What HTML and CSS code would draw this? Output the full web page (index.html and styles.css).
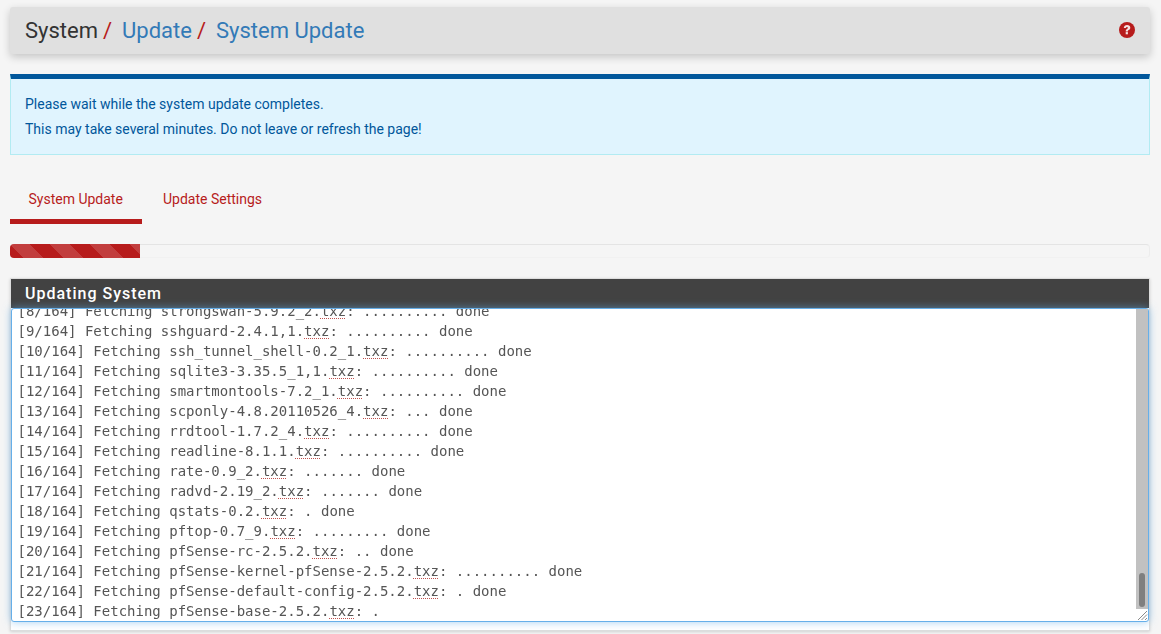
FILE: index.html
```html
<!DOCTYPE html>
<html lang="en">
<head>
<meta charset="utf-8">
<title>System / Update / System Update</title>
<link rel="stylesheet" href="styles.css">
</head>
<body>
<div class="page">
  <header class="crumbs">
    <h1 class="trail"><span>System</span><i class="sep">/</i><a class="link">Update</a><i class="sep">/</i><a class="link">System Update</a></h1>
    <svg class="help" viewBox="0 0 16 16" width="16" height="16" aria-hidden="true"><circle cx="8" cy="8" r="8" fill="#b71c1c"/><path d="M4.8 6C4.9 4.2 6.3 3 8.1 3c1.9 0 3.2 1.1 3.2 2.7 0 1.3-.8 1.9-1.6 2.4-.6.4-.8.6-.8 1.3H6.7c0-1.3.4-1.9 1.2-2.4.6-.4 1-.7 1-1.2 0-.5-.4-.8-.9-.8-.7 0-1.1.4-1.2 1z" fill="#f6e3e3"/><rect x="6.7" y="10.1" width="2.2" height="2.2" fill="#f6e3e3"/></svg>
  </header>

  <div class="notice">
    <p>Please wait while the system update completes.</p>
    <p>This may take several minutes. Do not leave or refresh the page!</p>
  </div>

  <nav class="tabs">
    <a class="tab active">System Update</a>
    <a class="tab">Update Settings</a>
  </nav>

  <div class="progress"><div class="bar" style="width:130px"></div></div>

  <section class="panel">
    <h2 class="panel-title">Updating System</h2>
    <div class="output">
      <div class="log">
<div>[8/164] Fetching strongswan-5.9.2_2.<u>txz</u>: .......... done</div>
<div>[9/164] Fetching sshguard-2.4.1,1.<u>txz</u>: .......... done</div>
<div>[10/164] Fetching ssh_tunnel_shell-0.2_1.<u>txz</u>: .......... done</div>
<div>[11/164] Fetching sqlite3-3.35.5_1,1.<u>txz</u>: .......... done</div>
<div>[12/164] Fetching smartmontools-7.2_1.<u>txz</u>: .......... done</div>
<div>[13/164] Fetching scponly-4.8.20110526_4.<u>txz</u>: ... done</div>
<div>[14/164] Fetching rrdtool-1.7.2_4.<u>txz</u>: .......... done</div>
<div>[15/164] Fetching readline-8.1.1.<u>txz</u>: .......... done</div>
<div>[16/164] Fetching rate-0.9_2.<u>txz</u>: ....... done</div>
<div>[17/164] Fetching radvd-2.19_2.<u>txz</u>: ....... done</div>
<div>[18/164] Fetching qstats-0.2.<u>txz</u>: . done</div>
<div>[19/164] Fetching pftop-0.7_9.<u>txz</u>: ......... done</div>
<div>[20/164] Fetching pfSense-rc-2.5.2.<u>txz</u>: .. done</div>
<div>[21/164] Fetching pfSense-kernel-pfSense-2.5.2.<u>txz</u>: .......... done</div>
<div>[22/164] Fetching pfSense-default-config-2.5.2.<u>txz</u>: . done</div>
<div>[23/164] Fetching pfSense-base-2.5.2.<u>txz</u>: .</div>
      </div>
      <div class="scrollbar"><div class="thumb"></div></div>
      <svg class="grip" viewBox="0 0 11 11" width="11" height="11" aria-hidden="true"><path d="M1 10 10 1M4.5 10 10 4.5M8 10l2-2" stroke="#8a8a8a" stroke-width="1" fill="none"/></svg>
    </div>
  </section>
</div>
</body>
</html>
```
FILE: styles.css
```css
* { box-sizing: border-box; }
html, body { margin: 0; height: 634px; overflow: hidden; }
body { background: #f5f5f5; font-family: Roboto, sans-serif; color: #333; }
.page { padding: 7px 11px 0 10px; }

.crumbs {
  display: flex; align-items: center; justify-content: space-between;
  height: 47px; padding: 0 15px;
  background: #e0e0e0; border-radius: 3px;
  box-shadow: 0 3px 8px rgba(0,0,0,.2);
}
.trail { margin: 0; font-size: 22px; font-weight: 400; line-height: 47px; display: flex; }
.sep { font-style: normal; color: #b71c1c; margin: 0 10px 0 5px; }
.link { color: #337ab7; }
.help { flex: none; margin-top: -1px; }

.notice {
  margin-top: 20px; height: 81px;
  padding: 15px 14px 0;
  background: #e0f4fe; color: #01579b;
  border: 1px solid #b2ebf2; border-top: 5px solid #01579b;
  font-size: 14px; line-height: 20px;
}
.notice p { margin: 0 0 5px; }

.tabs { display: flex; margin-top: 20px; height: 49px; }
.tab { font-size: 14px; color: #b71c1c; padding: 14px 19px 0 18.5px; line-height: 20px; }
.tab.active { width: 132px; border-bottom: 5px solid #b71c1c; }
.tab:not(.active) { padding-left: 21px; }

.progress {
  margin-top: 20px; height: 14px;
  background: #f5f5f5; border: 1px solid #ececec; border-top-color: #e4e4e4; border-bottom-color: #f1f1f1;
  border-radius: 4px; position: relative;
}
.bar {
  position: absolute; left: -1px; top: -1px; height: 14px;
  border-radius: 4px 0 0 4px;
  background-color: #b71c1c;
  background-image: linear-gradient(45deg, rgba(255,255,255,.15) 25%, transparent 25%, transparent 50%, rgba(255,255,255,.15) 50%, rgba(255,255,255,.15) 75%, transparent 75%, transparent);
  background-size: 40px 40px;
}

.panel {
  margin-top: 20px; height: 353px;
  background: #fff; border: 1px solid #ddd;
  box-shadow: 0 1px 3px rgba(0,0,0,.15);
}
.panel-title {
  margin: 0; height: 29px; padding-left: 14px;
  background: #424242; color: #fff;
  font-size: 16px; font-weight: 500; line-height: 30px; letter-spacing: 1px;
}
.output {
  position: relative; display: flex; height: 314px;
  background: #fff; border: 1px solid #66afe9; border-radius: 3px;
  box-shadow: 0 0 8px rgba(102,175,233,.6);
}
.log {
  flex: 1; min-width: 0; display: flex; flex-direction: column; justify-content: flex-end;
  overflow: hidden; padding: 0 6px 0 5.5px;
  font-family: "DejaVu Sans Mono", monospace; font-size: 14px; line-height: 20px;
  color: #555; white-space: pre; will-change: transform;
}
.log u { text-decoration: underline dotted #c0504d 1px; text-underline-offset: 2px; }
.scrollbar {
  flex: none; width: 12px; margin-bottom: 12px; padding-top: 264px;
  background: #c1c1c1; display: flex; justify-content: center; align-items: flex-start;
}
.thumb { width: 6px; height: 34px; border-radius: 3px; background: #7f7f7f; }
.grip { position: absolute; right: 0; bottom: 0; }
```
